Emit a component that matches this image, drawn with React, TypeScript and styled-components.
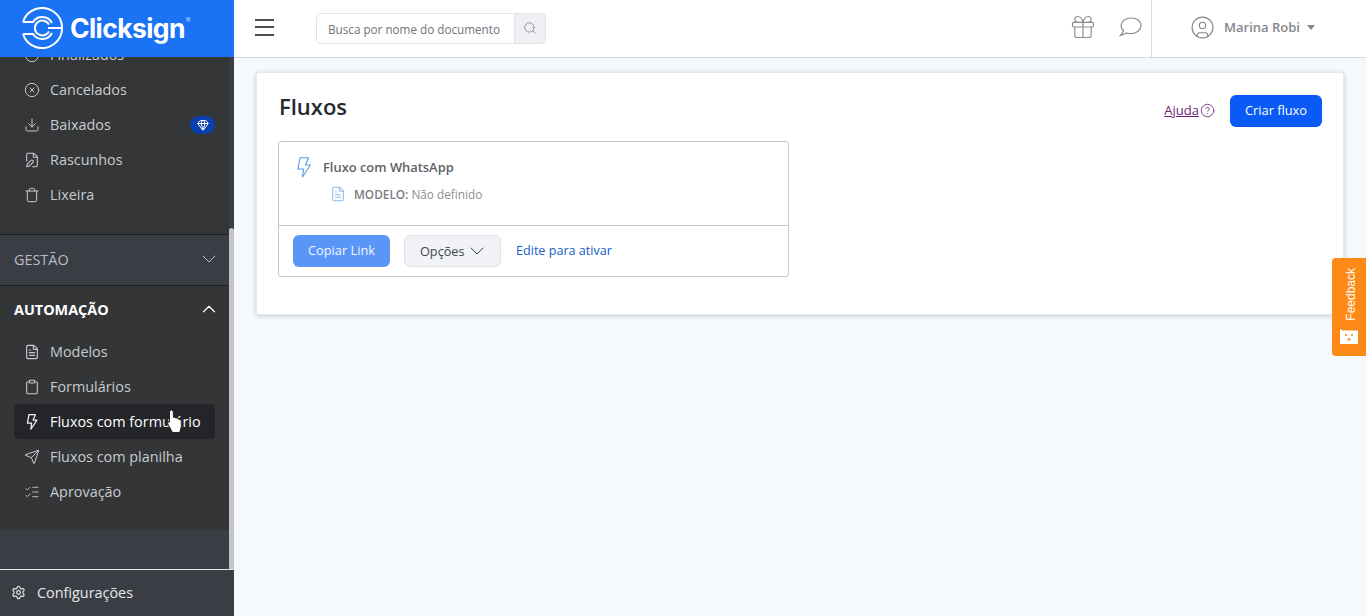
import styled, { createGlobalStyle } from "styled-components";
import {
  ChevronDown,
  ChevronUp,
  CircleHelp,
  CircleUser,
  CircleX,
  Clipboard,
  Clock,
  Download,
  FilePen,
  FileText,
  Gem,
  Gift,
  ListChecks,
  Search,
  Send,
  Settings,
  Trash,
} from "lucide-react";

const FONT = `"Open Sans", "Liberation Sans", sans-serif`;

const BoltIcon = ({ w, h, color, sw }: { w: number; h: number; color: string; sw: number }) => (
  <svg width={w} height={h} viewBox="0 0 14 21" fill="none" stroke={color} strokeWidth={sw} strokeLinejoin="round">
    <path d="M3 .8H11.500L8.500 8H13.500L5.500 20L6.500 12H1z" />
  </svg>
);

const App = () => {
  return (
    <>
      <GlobalStyles />
      <Page>
        <Sidebar>
          <LogoBar>
            <svg width="42" height="42" viewBox="0 0 42 42" fill="none" stroke="#fff" strokeWidth="2">
              <path d="M2 15A20 20 0 1 1 2 27" />
              <path d="M2 15H12A11 11 0 0 1 31 16" />
              <path d="M2 27H12A11 11 0 0 0 31 26" />
              <path d="M28 17.500A7.500 7.500 0 1 0 28 24.500" />
              <path d="M41 21H27" />
            </svg>
            <LogoText>
              Clicksign<sup>®</sup>
            </LogoText>
          </LogoBar>
          <SideScroll>
            <ScrolledGroup>
              <NavItem>
                <Clock size={16} strokeWidth={1.5} />
                Finalizados
              </NavItem>
              <NavItem>
                <CircleX size={16} strokeWidth={1.5} />
                Cancelados
              </NavItem>
              <NavItem>
                <Download size={16} strokeWidth={1.5} />
                Baixados
                <DiamondBadge>
                  <Gem size={12} strokeWidth={2} />
                </DiamondBadge>
              </NavItem>
              <NavItem>
                <FilePen size={16} strokeWidth={1.6} />
                Rascunhos
              </NavItem>
              <NavItem>
                <Trash size={16} strokeWidth={1.5} />
                Lixeira
              </NavItem>
            </ScrolledGroup>
            <SectionHead>
              GESTÃO
              <ChevronDown size={24} strokeWidth={1} />
            </SectionHead>
            <OpenSection>
              <SectionTitle>
                AUTOMAÇÃO
                <ChevronUp size={22} strokeWidth={1.3} />
              </SectionTitle>
              <NavItem>
                <FileText size={16} strokeWidth={1.7} />
                Modelos
              </NavItem>
              <NavItem>
                <Clipboard size={16} strokeWidth={1.6} />
                Formulários
              </NavItem>
              <NavItem $active>
                <BoltIcon w={16} h={16} color="#f2f4f7" sw={1.6} />
                Fluxos com formulário
              </NavItem>
              <NavItem>
                <Send size={16} strokeWidth={1.5} />
                Fluxos com planilha
              </NavItem>
              <NavItem>
                <ListChecks size={16} strokeWidth={1.3} />
                Aprovação
              </NavItem>
            </OpenSection>
            <ScrollThumb />
          </SideScroll>
          <SideFooter>
            <Settings size={15} strokeWidth={1.8} />
            Configurações
          </SideFooter>
        </Sidebar>

        <Main>
          <TopBar>
            <Burger>
              <span />
              <span />
              <span />
            </Burger>
            <SearchBox>
              <SearchText>Busca por nome do documento</SearchText>
              <SearchBtn>
                <Search size={14} strokeWidth={1.3} />
              </SearchBtn>
            </SearchBox>
            <TopIcons>
              <Gift size={28} strokeWidth={1} />
              <svg width="23" height="20" viewBox="0 0 23 20" fill="none" stroke="currentColor" strokeWidth="1.2">
                <path d="M12 1C6.500 1 2 4.300 2 8.500c0 2 1 3.900 2.800 5.200L1.500 18.500l6.500-2.500c1.200.4 2.600.6 4 .6 5.500 0 10-3.600 10-8.100S17.500 1 12 1z" />
              </svg>
            </TopIcons>
            <UserBox>
              <CircleUser size={25} strokeWidth={1.1} />
              <UserName>Marina Robi</UserName>
              <Caret />
            </UserBox>
          </TopBar>

          <Content>
            <Card>
              <CardHead>
                <Title>Fluxos</Title>
                <HeadActions>
                  <HelpLink>
                    <u>Ajuda</u>
                    <CircleHelp size={15} strokeWidth={1.3} />
                  </HelpLink>
                  <PrimaryBtn>Criar fluxo</PrimaryBtn>
                </HeadActions>
              </CardHead>
              <FlowCard>
                <FlowBody>
                  <FlowName>
                    <BoltIcon w={14} h={21} color="#5b9be8" sw={1.1} />
                    Fluxo com WhatsApp
                  </FlowName>
                  <FlowModel>
                    <FileText size={16} strokeWidth={1.6} color="#8fbdea" />
                    <span>
                      <b>MODELO:</b> Não definido
                    </span>
                  </FlowModel>
                </FlowBody>
                <FlowFoot>
                  <CopyBtn>Copiar Link</CopyBtn>
                  <OptionsBtn>
                    Opções
                    <ChevronDown size={24} strokeWidth={1} />
                  </OptionsBtn>
                  <EditLink>Edite para ativar</EditLink>
                </FlowFoot>
              </FlowCard>
            </Card>
          </Content>
        </Main>

        <FeedbackTab>
          <FeedbackLabel>Feedback</FeedbackLabel>
          <svg width="18" height="15" viewBox="0 0 18 15">
            <path d="M0 0l3 1.500h15V15H0z" fill="#fff" />
            <circle cx="6" cy="6" r="1.100" fill="#fd8a17" />
            <circle cx="12" cy="6" r="1.100" fill="#fd8a17" />
            <path d="M7 9.500h4a2 2 0 0 1-4 0z" fill="#fd8a17" />
          </svg>
        </FeedbackTab>

        <HandCursor width="15" height="24" viewBox="0 0 14 23">
          <path
            d="M2.200 2Q4 -.2 5.800 2L6 8Q8 7 8.500 9L9 8.500Q10.500 8 11 10L11.500 10Q13.500 10 13.500 12L13.500 17L12 22.500L5 22.500L.5 14Q0 12 2.200 12.500Z"
            fill="#fff"
            stroke="#1a1a1a"
            strokeWidth="0.9"
            strokeLinejoin="round"
          />
        </HandCursor>
      </Page>
    </>
  );
};

const GlobalStyles = createGlobalStyle`
  html, body {
    margin: 0;
    height: 100%;
    overflow: hidden;
    font-family: ${FONT};
  }
  * {
    box-sizing: border-box;
  }
`;

const Page = styled.div`
  position: relative;
  display: flex;
  width: 1366px;
  height: 616px;
  overflow: hidden;
  background-color: #f5f8fd;
`;

const Sidebar = styled.aside`
  display: flex;
  flex-direction: column;
  flex: 0 0 234px;
  height: 616px;
  background-color: #3a3d44;
`;

const LogoBar = styled.div`
  display: flex;
  align-items: center;
  gap: 7px;
  height: 57px;
  padding: 0 0 2px 21px;
  background-color: #1a73f5;
`;

const LogoText = styled.div`
  font-family: Inter, "Liberation Sans", sans-serif;
  font-size: 26.5px;
  font-weight: 700;
  letter-spacing: -0.6px;
  color: #fff;

  sup {
    font-size: 7px;
    font-weight: 400;
    vertical-align: 15px;
    line-height: 0;
    opacity: 0.7;
    margin-left: 1px;
  }
`;

const SideScroll = styled.div`
  position: relative;
  flex: 1;
  overflow: hidden;
  border-bottom: 1px solid #e8e8e8;
`;

const ScrollThumb = styled.div`
  position: absolute;
  top: 171px;
  right: 0;
  bottom: 0;
  width: 5px;
  border-radius: 3px 3px 0 0;
  background-color: #c4c4c4;
`;

const ScrolledGroup = styled.div`
  height: 198px;
  margin: -20px 5px 0 0;
  background-color: #343638;
  border-bottom: 1px solid #1d1e20;
`;

const NavItem = styled.div<{ $active?: boolean }>`
  display: flex;
  align-items: center;
  gap: 10px;
  width: 201px;
  height: 35px;
  margin-left: 14px;
  padding-left: 10px;
  border-radius: 4px;
  font-size: 14.4px;
  color: ${({ $active }) => ($active ? "#ffffff" : "#c8cbd0")};
  background-color: ${({ $active }) => ($active ? "#232529" : "transparent")};
  white-space: nowrap;

  svg {
    flex: none;
  }
`;

const DiamondBadge = styled.span`
  display: flex;
  align-items: center;
  justify-content: center;
  width: 25px;
  height: 18px;
  margin-left: auto;
  border-radius: 9px;
  background-color: #0a3fae;
  color: #fff;
`;

const SectionHead = styled.div`
  display: flex;
  align-items: center;
  justify-content: space-between;
  height: 51px;
  padding: 0 8px 2px 14px;
  margin-right: 5px;
  font-size: 14.4px;
  color: #b9bcc2;
  border-bottom: 1px solid #1d1e20;
`;

const OpenSection = styled.div`
  height: 244px;
  margin-right: 5px;
  background-color: #333537;
`;

const SectionTitle = styled.div`
  display: flex;
  align-items: center;
  justify-content: space-between;
  height: 48px;
  padding: 0 9px 2px 14px;
  font-size: 14.4px;
  font-weight: 700;
  color: #fff;
`;

const SideFooter = styled.div`
  display: flex;
  align-items: center;
  gap: 11px;
  height: 46px;
  padding: 0 0 1px 11px;
  font-size: 14.4px;
  color: #e6e8eb;
`;

const Main = styled.main`
  display: flex;
  flex-direction: column;
  flex: 1;
  min-width: 0;
`;

const TopBar = styled.header`
  display: flex;
  align-items: center;
  height: 58px;
  flex: none;
  background-color: #fff;
  border-bottom: 1px solid #d9d9e1;
`;

const Burger = styled.div`
  display: flex;
  flex-direction: column;
  gap: 5.5px;
  width: 19px;
  margin: 0 0 3px 21px;

  span {
    height: 2px;
    background-color: #4a4d52;
  }
`;

const SearchBox = styled.div`
  display: flex;
  width: 230px;
  height: 31px;
  margin: 0 0 1px 42px;
  border: 1px solid #e3e4ea;
  border-radius: 4px;
  overflow: hidden;
`;

const SearchText = styled.div`
  flex: 1;
  padding-left: 11px;
  font-size: 11.7px;
  line-height: 30px;
  white-space: nowrap;
  color: #6f737a;
`;

const SearchBtn = styled.div`
  display: flex;
  align-items: center;
  justify-content: center;
  width: 31px;
  background-color: #eff0f4;
  border-left: 1px solid #e3e4ea;
  color: #777b82;
`;

const TopIcons = styled.div`
  display: flex;
  align-items: center;
  gap: 22px;
  margin-left: auto;
  padding: 0 9px 3px 0;
  color: #8a8c90;
`;

const UserBox = styled.div`
  display: flex;
  align-items: center;
  width: 215px;
  height: 57px;
  padding: 0 0 3px 38px;
  border-left: 1px solid #d9d9d9;
  color: #85878b;
`;

const UserName = styled.span`
  margin-left: 9px;
  font-size: 13px;
  font-weight: 600;
  color: #85878b;
`;

const Caret = styled.span`
  width: 0;
  height: 0;
  margin-left: 7px;
  border-left: 4px solid transparent;
  border-right: 4px solid transparent;
  border-top: 5px solid #85878b;
`;

const Content = styled.div`
  padding: 14px 22px 0;
`;

const Card = styled.section`
  height: 243px;
  padding: 21px 21px 0;
  background-color: #fff;
  border-radius: 3px;
  border: 1px solid #e6e8ee;
  box-shadow: 0 1px 4px rgba(60, 70, 90, 0.25);
`;

const CardHead = styled.div`
  display: flex;
  justify-content: space-between;
  align-items: flex-start;
  height: 47px;
`;

const Title = styled.h1`
  margin: 0 0 0 1px;
  font-size: 22px;
  line-height: 24px;
  font-weight: 600;
  color: #24292f;
`;

const HeadActions = styled.div`
  display: flex;
  align-items: center;
  gap: 15px;
  margin-top: 1px;
`;

const HelpLink = styled.span`
  display: flex;
  align-items: center;
  gap: 1px;
  margin-bottom: 2px;
  font-size: 13px;
  color: #6b1f7d;
`;

const PrimaryBtn = styled.button`
  width: 92px;
  height: 32px;
  padding: 0 0 2px;
  border: none;
  border-radius: 6px;
  background-color: #0a5af5;
  color: #fff;
  font-family: ${FONT};
  font-size: 12.8px;
`;

const FlowCard = styled.div`
  width: 511px;
  height: 136px;
  border: 1px solid #c6c7cb;
  border-radius: 3px;
`;

const FlowBody = styled.div`
  height: 84px;
  padding: 14px 0 0 18px;
  border-bottom: 1px solid #c6c7cb;
`;

const FlowName = styled.div`
  display: flex;
  align-items: center;
  gap: 12px;
  height: 22px;
  font-size: 12.9px;
  font-weight: 600;
  color: #5f6266;
`;

const FlowModel = styled.div`
  display: flex;
  align-items: center;
  gap: 8px;
  margin: 8px 0 0 33px;
  font-size: 11.8px;
  color: #8d8f94;

  b {
    font-weight: 600;
    color: #7b7d82;
  }
`;

const FlowFoot = styled.div`
  display: flex;
  align-items: center;
  height: 50px;
  padding-left: 14px;
`;

const CopyBtn = styled.button`
  width: 97px;
  height: 32px;
  padding: 0 0 2px;
  border: none;
  border-radius: 6px;
  background-color: #5a95f8;
  color: #f2f6ff;
  font-family: ${FONT};
  font-size: 12.8px;
`;

const OptionsBtn = styled.button`
  display: flex;
  align-items: center;
  width: 97px;
  height: 32px;
  margin-left: 14px;
  padding: 0 0 1px 15px;
  border: 1px solid #dfe1e8;
  border-radius: 6px;
  background-color: #f0f2f7;
  color: #44474c;
  font-family: ${FONT};
  font-size: 12.7px;
`;

const EditLink = styled.span`
  margin: 0 0 2px 15px;
  font-size: 12.6px;
  color: #1560c9;
`;

const FeedbackTab = styled.div`
  position: absolute;
  top: 258px;
  right: 0;
  display: flex;
  flex-direction: column;
  align-items: center;
  justify-content: flex-end;
  gap: 8px;
  width: 34px;
  height: 98px;
  padding-bottom: 12px;
  border-radius: 4px 0 0 4px;
  background-color: #fd8a17;
`;

const FeedbackLabel = styled.span`
  margin-left: 3px;
  writing-mode: vertical-rl;
  transform: rotate(180deg);
  font-family: "Liberation Sans", sans-serif;
  font-size: 12px;
  color: #fff;
`;

const HandCursor = styled.svg`
  position: absolute;
  top: 409px;
  left: 167px;
`;

export default App;
